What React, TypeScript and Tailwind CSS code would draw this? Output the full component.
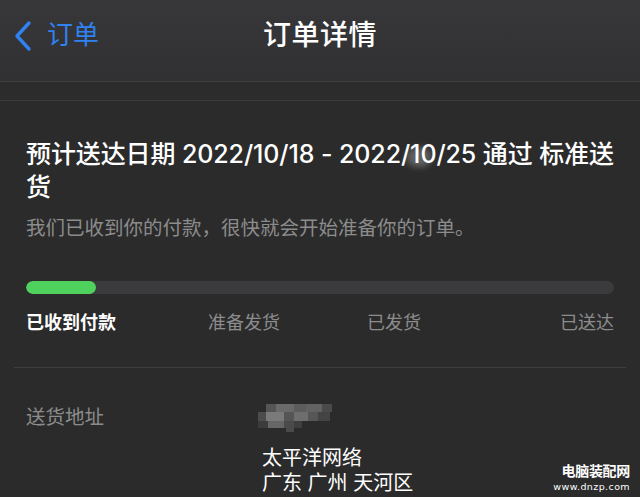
import React from "react";

const font = { fontFamily: "Inter, 'Noto Sans CJK SC', 'Noto Sans', sans-serif" };

function Pixelated() {
  const cells: [number, number, number, number, string][] = [
    [8, 0, 10, 8, "#555"],
    [18, 0, 18, 8, "#6a6a6a"],
    [36, 0, 12, 8, "#5c5c5c"],
    [48, 0, 16, 8, "#626262"],
    [64, 0, 10, 8, "#4a4a4a"],
    [0, 8, 8, 9, "#4c4c4c"],
    [8, 8, 18, 9, "#7a7a7a"],
    [26, 8, 10, 9, "#555"],
    [36, 8, 14, 9, "#6e6e6e"],
    [50, 8, 10, 9, "#565656"],
    [60, 8, 12, 9, "#444"],
    [0, 17, 10, 7, "#3c3c3c"],
    [10, 17, 16, 7, "#666"],
    [26, 17, 10, 7, "#4a4a4a"],
    [36, 17, 8, 7, "#3f3f3f"],
    [28, 24, 8, 4, "#4a4a4a"],
  ];
  return (
    <div className="relative w-[76px] h-[28px]">
      {cells.map(([x, y, w, h, c], i) => (
        <div
          key={i}
          className="absolute"
          style={{ left: x, top: y, width: w, height: h, background: c }}
        />
      ))}
    </div>
  );
}

export default function App() {
  return (
    <div className="w-[640px] h-[497px] overflow-hidden bg-[#2b2b2b] text-white" style={font}>
      {/* Nav bar */}
      <div className="h-[82px] bg-gradient-to-b from-[#37373a] to-[#313133] border-b border-[#3f3f41] grid grid-cols-[1fr_auto_1fr] items-start pt-[16px]">
        <div className="flex items-center pl-[14px] text-[#2f82f0]">
          <svg width="18" height="32" viewBox="0 0 18 32" className="mt-[2px]">
            <path d="M15 3 L3 16 L15 29" fill="none" stroke="#2f82f0" strokeWidth="3.4" strokeLinecap="round" strokeLinejoin="round" />
          </svg>
          <span className="ml-[15px] text-[26px] leading-[38px]">订单</span>
        </div>
        <div className="text-[28px] leading-[38px] font-medium tracking-[0.5px]">订单详情</div>
        <div />
      </div>
      {/* band */}
      <div className="h-[19px] bg-[#2c2c2c] border-b border-[#3a3a3a]" />

      {/* content */}
      <div className="px-[26px] pt-[37px]">
        <div className="relative text-[25px] leading-[33px] font-medium tracking-[-0.1px]">
          预计送达日期 2022/10/18 - 2022/10/25 通过 标准送货
          <div className="absolute left-[380px] top-[9px] w-[26px] h-[20px] rounded-full bg-white/25 blur-[3px]" />
        </div>
        <div className="mt-[11px] text-[19.5px] leading-[26px] text-[#8c8c8c]">
          我们已收到你的付款，很快就会开始准备你的订单。
        </div>

        <div className="mt-[40px] h-[13px] rounded-full bg-[#3b3b3d] overflow-hidden">
          <div className="h-full w-[70px] rounded-full bg-[#4fd15d]" />
        </div>

        <div className="mt-[18px] flex text-[18px] leading-[22px]">
          <span className="font-semibold">已收到付款</span>
          <span className="ml-[92px] text-[#8c8c8c]">准备发货</span>
          <span className="ml-[87px] text-[#8c8c8c]">已发货</span>
          <span className="ml-auto text-[#8c8c8c]">已送达</span>
        </div>
      </div>

      <div className="mx-[14px] mt-[33px] h-px bg-[#3e3e3e]" />

      <div className="px-[26px] pt-[35px] grid grid-cols-[232px_1fr]">
        <div className="text-[19.5px] leading-[28px] text-[#8c8c8c]">送货地址</div>
        <div>
          <div className="pt-[1px]">
            <Pixelated />
          </div>
          <div className="relative">
            <div className="mt-[14px] pl-[4px] text-[20px] leading-[25px] text-white">
              <div>太平洋网络</div>
              <div>广东 广州 天河区</div>
            </div>
            <div className="absolute right-[-16px] top-[16px] flex flex-col items-end">
              <span className="text-[14px] leading-[18px] font-bold tracking-[-0.3px]">电脑装配网</span>
              <span className="text-[9.5px] leading-[14px] tracking-[0.4px]" style={{ fontFamily: "'DejaVu Sans', sans-serif" }}>www.dnzp.com</span>
            </div>
          </div>
        </div>
      </div>
    </div>
  );
}
